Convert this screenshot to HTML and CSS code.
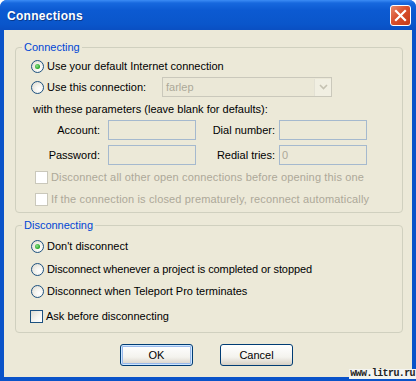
FILE: index.html
```html
<html>
    <head>
        <title>Connections</title>
        <link rel="stylesheet" href="styles.css">
    </head>
    <body>
        <div class="window">
            <div class="titlebar">
                <span class="title">Connections</span>
                <span class="close">
                    <svg width="13" height="13" viewBox="0 0 13 13">
                        <path d="M2 2 L11 11 M11 2 L2 11" stroke="white" stroke-width="2.2" stroke-linecap="square"/>
                    </svg>
                </span>
            </div>

            <div class="content">
                <div class="group g1">
                    <span class="legend">Connecting</span>
                    <div class="row r22"><span class="radio on"></span>Use your default Internet connection</div>
                    <div class="row r20">
                        <span class="radio"></span>
                        <span class="conn-label">Use this connection:</span>
                        <div class="select">
                            <span class="select-text">farlep</span>
                            <span class="arrow">
                                <svg width="9" height="6" viewBox="0 0 9 6">
                                    <path d="M1 1 L4.5 4.5 L8 1" stroke="#C5C2B2" stroke-width="1.6" fill="none"/>
                                </svg>
                            </span>
                        </div>
                    </div>
                    <div class="row r23 params">with these parameters (leave blank for defaults):</div>
                    <div class="row r20 fields">
                        <label class="flabel">Account:</label>
                        <span class="input"></span>
                        <label class="flabel dial">Dial number:</label>
                        <span class="input"></span>
                    </div>
                    <div class="row r20 fields gap5">
                        <label class="flabel">Password:</label>
                        <span class="input"></span>
                        <label class="flabel dial">Redial tries:</label>
                        <span class="input">0</span>
                    </div>
                    <div class="row r22 sub disabled gap1"><span class="check off"></span>Disconnect all other open connections before opening this one</div>
                    <div class="row r22 sub disabled"><span class="check off"></span>If the connection is closed prematurely, reconnect automatically</div>
                </div>

                <div class="group g2">
                    <span class="legend">Disconnecting</span>
                    <div class="row r22"><span class="radio on"></span>Don't disconnect</div>
                    <div class="row r22 gap1 tight"><span class="radio"></span>Disconnect whenever a project is completed or stopped</div>
                    <div class="row r22"><span class="radio"></span>Disconnect when Teleport Pro terminates</div>
                    <div class="row r22 gap3 cb2"><span class="check"></span>Ask before disconnecting</div>
                </div>

                <div class="buttons">
                    <button class="button default">OK</button>
                    <button class="button">Cancel</button>
                </div>
            </div>

            <span class="watermark">www.litru.ru</span>
        </div>
    </body>
</html>
```

FILE: styles.css
```css
body {
    margin: 0;
    background-color: white;
    font-family: "Liberation Sans", Arial, sans-serif;
    font-size: 11px;
}

.window {
    position: relative;
    width: 416px;
    height: 381px;
    display: flex;
    flex-direction: column;
    background-color: #0A53C9;
    border-radius: 7px 7px 0 0;
    overflow: hidden;
}

.titlebar {
    height: 30px;
    flex-shrink: 0;
    display: flex;
    align-items: center;
    justify-content: space-between;
    padding: 0 5px 0 7px;
    background: linear-gradient(#3C8CF5 0, #1768DE 3px, #0C5AD2 10px, #0A56CB 24px, #0A4FC2 30px);
}

.title {
    color: white;
    font-size: 12px;
    font-weight: bold;
    letter-spacing: 0.3px;
    text-shadow: 1px 1px 0 #0A3A8C;
    margin-top: 1px;
}

.close {
    width: 19px;
    height: 19px;
    display: flex;
    align-items: center;
    justify-content: center;
    border: 1px solid white;
    border-radius: 3px;
    background: linear-gradient(135deg, #E88A6C 0, #D9502D 45%, #C43B18 100%);
    margin-top: 1px;
}

.content {
    flex: 1;
    margin: 0 4px 4px 4px;
    background-color: #ECE9D8;
    display: flex;
    flex-direction: column;
}

.group {
    position: relative;
    border: 1px solid #D0D0BF;
    border-radius: 4px;
    margin-left: 11px;
    margin-right: 9px;
    padding-left: 15px;
    display: flex;
    flex-direction: column;
}

.g1 {
    margin-top: 17px;
    padding-top: 7px;
    padding-bottom: 2px;
}

.g2 {
    margin-top: 12px;
    padding-top: 9px;
    padding-bottom: 5px;
}

.legend {
    position: absolute;
    top: -7px;
    left: 6px;
    padding: 0 2px;
    background-color: #ECE9D8;
    color: #0046D5;
    line-height: 13px;
}

.row {
    display: flex;
    align-items: center;
    color: black;
    white-space: nowrap;
}

.r20 { height: 20px; }
.r22 { height: 22px; }
.r23 { height: 23px; }
.gap1 { margin-top: 1px; }
.gap3 { margin-top: 3px; }
.gap5 { margin-top: 5px; }

.tight {
    letter-spacing: -0.1px;
}

.params {
    padding-left: 2px;
}

.sub {
    padding-left: 4px;
}

.cb2 {
    margin-left: -1px;
}

.disabled {
    color: #ACA899;
    letter-spacing: 0.15px;
}

.radio {
    width: 11px;
    height: 11px;
    border: 1px solid #1C5180;
    border-radius: 50%;
    background: radial-gradient(circle at 65% 65%, #FFFFFF 0, #F4F3EE 40%, #D9D6CA 100%);
    margin-right: 3px;
    display: flex;
    align-items: center;
    justify-content: center;
    flex-shrink: 0;
}

.radio.on::after {
    content: "";
    width: 5px;
    height: 5px;
    border-radius: 50%;
    background: radial-gradient(circle at 40% 40%, #8FE38F 0, #21A121 70%);
}

.check {
    width: 11px;
    height: 11px;
    border: 1px solid #1C5180;
    background: linear-gradient(135deg, #DCDBD3 0, #F6F6F3 60%, #FFFFFF 100%);
    margin-right: 3px;
    flex-shrink: 0;
}

.check.off {
    border-color: #CAC8BB;
    background: white;
}

.conn-label {
    width: 115px;
}

.select {
    width: 168px;
    height: 18px;
    border: 1px solid #CAC8BB;
    background-color: #EBE8D7;
    display: flex;
    align-items: center;
    justify-content: space-between;
}

.select-text {
    color: #ACA899;
    padding-left: 3px;
}

.arrow {
    width: 16px;
    height: 17px;
    background-color: #F1EFE2;
    border-left: 1px solid #E3E1D4;
    display: flex;
    align-items: center;
    justify-content: center;
}

.flabel {
    width: 69px;
    text-align: right;
    margin-right: 8px;
}

.flabel.dial {
    width: 79px;
    margin-right: 4px;
}

.input {
    width: 84px;
    height: 18px;
    border: 1px solid #A5B9CE;
    background-color: #ECE9D8;
    color: #ACA899;
    line-height: 18px;
    padding-left: 2px;
}

.buttons {
    display: flex;
    justify-content: center;
    gap: 27px;
    margin-top: 11px;
    padding-right: 3px;
}

.button {
    width: 73px;
    height: 22px;
    border: 1px solid #003C74;
    border-radius: 3px;
    background: linear-gradient(#FFFFFF 0, #F4F3EE 60%, #D6D0C5 100%);
    font-family: "Liberation Sans", Arial, sans-serif;
    font-size: 11px;
    color: black;
    padding: 0;
}

.button.default {
    box-shadow: inset 0 0 0 1px #CEE7FF, inset 0 0 0 2px #98B8EA;
}

.watermark {
    position: absolute;
    right: 0;
    bottom: 2px;
    padding: 0 1px;
    background-color: #F4F4F0;
    font-family: "Liberation Mono", monospace;
    font-size: 10px;
    font-weight: bold;
    line-height: 10px;
    color: #222;
    letter-spacing: -0.6px;
}
```
